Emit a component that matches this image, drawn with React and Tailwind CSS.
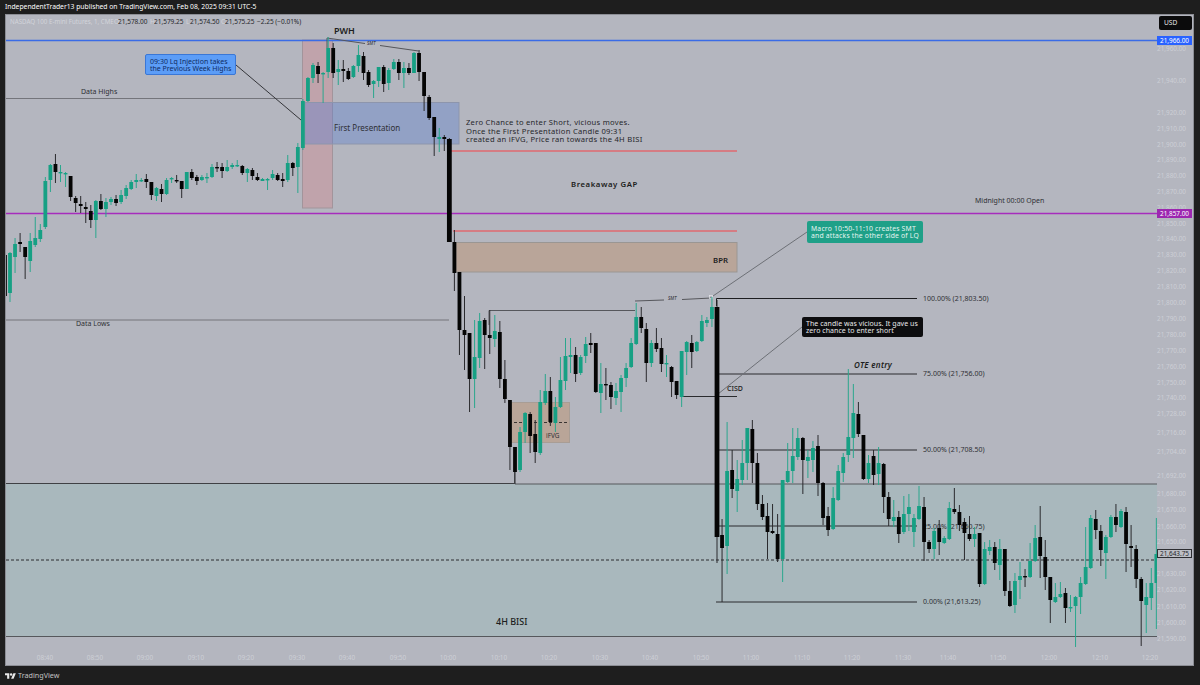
const candles = [
  [0,255,255,296,296],[1,252,253,293,302],[1,238,244,257,273],[0,233,242,244,252],[0,247,247,257,279],[1,233,241,261,272],[1,217,238,245,247],[1,224,230,239,242],
  [1,177,181,227,229],[1,164,165,180,192],[0,154,164,172,183],[1,165,172,173,182],[1,172,173,174,187],[0,176,176,197,201],[0,196,198,203,212],[0,196,204,206,213],
  [0,202,207,209,223],[0,205,211,220,228],[1,200,201,220,238],[0,194,201,209,210],[1,198,202,209,217],[1,197,199,202,205],[0,195,199,203,206],[1,190,195,202,204],
  [1,185,188,196,199],[1,180,182,189,190],[1,174,180,182,188],[1,178,180,181,182],[0,174,179,182,188],[0,182,182,195,200],[1,187,188,196,201],[0,184,189,194,202],
  [1,178,180,194,195],[1,177,178,179,183],[0,175,180,181,183],[0,181,181,189,198],[1,172,172,189,189],[0,169,172,178,180],[0,175,177,181,185],[1,175,177,180,181],
  [1,173,177,178,183],[1,164,167,177,178],[0,162,167,168,172],[0,163,167,171,178],[1,160,167,171,172],[1,163,165,167,169],[1,160,165,166,167],[0,165,166,173,175],
  [1,168,169,173,182],[0,168,170,176,180],[0,173,177,180,181],[1,178,179,181,181],[1,178,179,180,190],[1,170,174,178,180],[0,173,175,180,181],[0,173,179,181,187],
  [1,155,163,180,182],[0,162,163,168,176],[1,143,147,167,193],[1,99,101,148,150],[1,77,78,101,102],[1,63,65,78,83],[0,62,66,74,83],[1,72,73,74,103],
  [1,37,48,72,78],[0,43,48,73,78],[1,60,69,72,85],[0,60,69,71,82],[0,68,71,79,80],[1,65,66,77,78],[1,45,55,66,72],[0,52,56,73,80],
  [0,70,72,85,87],[1,80,81,84,98],[1,67,67,81,87],[0,65,67,84,92],[1,68,70,83,90],[1,59,62,69,70],[0,59,62,73,80],[1,62,68,73,88],
  [0,63,68,73,75],[1,52,53,73,73],[0,50,53,72,81],[0,72,72,96,111],[0,95,97,118,120],[0,117,117,137,156],[1,128,137,139,152],[0,135,137,139,151],
  [0,138,139,242,242],[0,230,242,273,291],[0,272,272,330,355],[0,296,330,335,370],[0,333,333,379,412],[1,320,357,379,408],[1,313,321,358,368],[0,318,320,335,369],
  [0,310,335,338,354],[1,315,331,339,347],[0,321,332,379,388],[0,360,379,399,403],[0,400,400,447,470],[0,447,447,472,484],[1,427,432,470,472],[1,412,413,432,443],
  [0,412,414,436,453],[0,420,434,452,463],[1,390,402,453,455],[1,374,391,403,405],[0,377,391,422,426],[1,397,407,423,432],[1,357,380,407,408],[1,338,356,381,390],
  [1,338,355,357,373],[0,347,355,374,382],[1,355,357,373,375],[1,337,344,356,363],[0,333,343,345,353],[0,343,343,392,393],[1,363,384,393,413],[0,368,384,385,400],
  [0,382,385,397,409],[1,383,391,398,405],[1,375,378,392,412],[1,363,368,378,387],[1,338,343,367,368],[1,303,317,344,345],[0,307,317,328,333],[0,323,329,363,382],
  [1,340,343,363,367],[0,328,343,349,352],[0,338,348,364,372],[1,355,363,364,377],[0,366,367,382,397],[0,381,381,395,399],[1,351,351,397,407],[1,341,342,352,375],
  [0,335,343,352,368],[1,341,342,351,352],[1,315,321,341,342],[1,317,320,323,327],[1,297,307,319,327],[0,300,307,537,563],[0,519,535,548,602],[1,422,471,546,574],
  [0,450,470,489,498],[1,460,479,491,512],[1,440,463,480,485],[1,428,428,463,480],[0,420,429,463,483],[0,453,463,504,510],[0,495,504,517,520],[0,503,516,532,559],
  [0,504,531,533,534],[0,514,534,559,562],[1,480,480,559,582],[1,443,471,482,483],[1,428,456,471,483],[1,428,438,457,460],[0,437,438,460,494],[1,450,457,461,478],
  [1,441,448,460,472],[0,435,446,483,496],[0,482,483,518,525],[0,507,516,530,536],[1,487,498,529,530],[1,465,471,500,501],[1,453,457,473,482],[1,369,437,455,462],
  [1,384,413,438,458],[0,402,414,434,437],[0,435,435,479,480],[1,455,463,479,483],[0,450,456,475,485],[1,447,463,474,485],[0,463,464,497,513],[0,492,497,519,526],
  [1,500,517,521,527],[0,511,517,534,543],[1,496,514,532,534],[1,494,507,514,531],[1,514,518,532,547],[1,486,506,519,520],[0,497,507,542,561],[0,540,542,549,553],
  [1,528,531,549,559],[0,520,528,542,555],[1,536,538,543,544],[1,502,508,539,540],[0,488,509,512,514],[0,505,512,525,531],[0,518,522,533,560],[0,516,534,539,541],
  [1,527,534,539,547],[0,533,533,584,587],[1,542,549,584,585],[1,540,547,551,555],[0,542,547,563,570],[1,539,549,565,580],[0,549,549,591,596],[0,581,591,606,607],
  [1,573,581,605,613],[1,562,576,580,599],[0,569,576,577,587],[1,543,561,577,578],[1,525,538,561,562],[0,506,537,556,578],[0,540,557,577,590],[0,577,577,600,623],
  [1,583,597,602,603],[1,582,594,597,598],[0,588,593,608,623],[1,595,607,608,612],[1,596,597,606,647],[1,577,583,597,614],[1,527,567,584,585],[1,515,518,568,569],
  [0,510,519,530,539],[0,525,531,550,566],[1,535,537,553,579],[1,515,517,537,538],[0,504,517,525,532],[1,509,511,527,528],[0,507,512,544,572],[0,525,546,548,567],
  [0,545,549,579,588],[0,577,579,601,646],[1,583,597,605,633],[1,568,583,598,610],[1,518,554,583,629],
]

const priceTicks = [
  ["21,960.00",49],["21,940.00",81],["21,920.00",113],["21,910.00",129],["21,900.00",145],["21,890.00",160],["21,880.00",176],["21,870.00",192],
  ["21,860.00",208],["21,850.00",224],["21,840.00",239],["21,830.00",255],["21,820.00",271],["21,810.00",287],["21,800.00",303],["21,790.00",319],
  ["21,780.00",335],["21,770.00",351],["21,760.00",367],["21,750.00",383],["21,740.00",398],["21,728.00",414],["21,716.00",433],["21,704.00",452],
  ["21,692.00",476],["21,680.00",494],["21,670.00",510],["21,660.00",527],["21,650.00",542],["21,630.00",574],["21,620.00",590],["21,610.00",607],
  ["21,600.00",623],["21,590.00",639],
]

const timeTicks = [
  ["08:40",45],["08:50",95],["09:00",145],["09:10",196],["09:20",246],["09:30",297],["09:40",347],["09:50",398],["10:00",448],["10:10",499],["10:20",549],["10:30",600],
  ["10:40",650],["10:50",701],["11:00",751],["11:10",802],["11:20",852],["11:30",903],["11:40",948],["11:50",998],["12:00",1049],["12:10",1100],["12:20",1150],
]

const Candles = () => candles.map(([up, top, open, close, low], i) => {
  const x = 4.95 + 5.05 * i
  const big = close - open > 90
  return (
    <g key={i}>
      <line x1={x} x2={x} y1={top} y2={low} stroke={up ? "#2aa78d" : "#2a2a2e"} strokeWidth="1" />
      <rect x={x - (big ? 2.4 : 1.9)} width={big ? 4.8 : 3.8} y={open} height={Math.max(close - open, 1.4)} fill={up ? "#17a084" : "#050505"} />
    </g>
  )
})

const Label = ({ x, y, size = 7, weight, italic, spacing, color = "#2f3035", children }) => (
  <text x={x} y={y} fontSize={size} fontWeight={weight} letterSpacing={spacing} fontStyle={italic ? "italic" : undefined} fill={color}>{children}</text>
)

const ChartDrawing = () => (
  <svg className="absolute inset-0 h-full w-full" viewBox="6 15 1151 635">
    {/* zones */}
    <rect x="6" y="484" width="1151" height="152" fill="#a9b8bd" />
    <rect x="302.5" y="40" width="30" height="168" fill="#c0a3ab" stroke="#a2949b" />
    <rect x="305" y="102.5" width="154" height="41.5" fill="#5c7fd0" fillOpacity="0.38" stroke="#8d95ac" />
    <rect x="456" y="242.5" width="281" height="29.5" fill="#b9a599" stroke="#9a9693" />
    <rect x="511.5" y="402.5" width="58" height="40" fill="#b9a598" stroke="#a89d95" />
    {/* levels */}
    <line x1="6" x2="1157" y1="40.5" y2="40.5" stroke="#3a6ce6" strokeWidth="1.4" />
    <line x1="6" x2="1157" y1="213.5" y2="213.5" stroke="#a62cbd" strokeWidth="1.4" />
    <line x1="6" x2="302" y1="98.5" y2="98.5" stroke="#74757b" />
    <line x1="6" x2="449" y1="320" y2="320" stroke="#74757b" />
    <line x1="236" x2="301" y1="65" y2="120" stroke="#35363a" />
    <line x1="450" x2="737" y1="151" y2="151" stroke="#e0696f" strokeWidth="1.6" />
    <line x1="453" x2="737" y1="231" y2="231" stroke="#e0696f" strokeWidth="1.6" />
    <line x1="6" x2="515" y1="483.5" y2="483.5" stroke="#3f4044" strokeWidth="1.2" />
    <line x1="515" x2="1157" y1="484" y2="484" stroke="#56585c" />
    <line x1="514.5" x2="514.5" y1="470" y2="484" stroke="#56585c" />
    <line x1="6" x2="1157" y1="636.5" y2="636.5" stroke="#56585c" />
    <line x1="6" x2="1157" y1="560" y2="560" stroke="#2c2d30" strokeDasharray="3 2" />
    <line x1="514" x2="569" y1="422.5" y2="422.5" stroke="#3a3532" strokeDasharray="3 2" />
    {/* smt */}
    <path d="M327 48V38L365 43.5M380 45.5L418.5 51" fill="none" stroke="#55565b" />
    <path d="M489 325V310.5H635M635 301L664 300M682 299.5L711 298" fill="none" stroke="#56575c" />
    <rect x="709.5" y="295.5" width="3" height="3" fill="none" stroke="#e4e5ea" strokeWidth="0.7" />
    {/* fib */}
    <path d="M716.5 306V298.5H917" fill="none" stroke="#1d1e20" />
    <line x1="718" x2="917" y1="374" y2="374" stroke="#2a2b2e" />
    <line x1="718" x2="917" y1="450" y2="450" stroke="#2a2b2e" />
    <line x1="718" x2="917" y1="526" y2="526" stroke="#2a2b2e" />
    <line x1="716" x2="917" y1="602" y2="602" stroke="#2a2b2e" />
    <line x1="681" x2="737" y1="396.5" y2="396.5" stroke="#2a2b2e" />
    <line x1="807" x2="713" y1="232" y2="296" stroke="#6d7076" />
    <line x1="802" x2="718" y1="327" y2="394" stroke="#6d7076" />

    {/* chart labels */}
    <Label x={334} y={34} size={9} weight={600} color="#1c1d20">PWH</Label>
    <Label x={367} y={45} size={4.6} italic color="#26272b">SMT</Label>
    <Label x={668} y={300} size={4.6} italic color="#26272b">SMT</Label>
    <Label x={81} y={94}>Data Highs</Label>
    <Label x={76} y={326}>Data Lows</Label>
    <Label x={334} y={131} size={8}>First Presentation</Label>
    <Label x={466} y={125} size={7.6} spacing={0.28} color="#26272b">Zero Chance to enter Short, vicious moves.</Label>
    <Label x={466} y={133.5} size={7.6} spacing={0.28} color="#26272b">Once the First Presentation Candle 09:31</Label>
    <Label x={466} y={142} size={7.6} spacing={0.28} color="#26272b">created an iFVG, Price ran towards the 4H BISI</Label>
    <Label x={571} y={187} size={7.8} spacing={0.55} weight={600} color="#1c1d20">Breakaway GAP</Label>
    <Label x={975} y={203}>Midnight 00:00 Open</Label>
    <Label x={713} y={263} size={7.8} weight={600} color="#1c1d20">BPR</Label>
    <Label x={546} y={438} size={6.4}>iFVG</Label>
    <Label x={727} y={391} weight={500} color="#1c1d20">CISD</Label>
    <Label x={854} y={368} size={8} spacing={0.3} weight={600} italic color="#1c1d20">OTE entry</Label>
    <Label x={923} y={301}>100.00% (21,803.50)</Label>
    <Label x={923} y={376}>75.00% (21,756.00)</Label>
    <Label x={923} y={452}>50.00% (21,708.50)</Label>
    <Label x={923} y={529}>25.00% (21,660.75)</Label>
    <Label x={923} y={604}>0.00% (21,613.25)</Label>
    <Label x={496} y={625} size={9} weight={500} color="#1c1d20">4H BISI</Label>

    <Candles />
  </svg>
)

const Legend = () => (
  <div className="absolute left-[4px] top-[3px] flex h-[8px] items-center whitespace-nowrap text-[6.5px] text-[#26272b]">
    <span className="w-[104px] overflow-hidden text-[6.2px] text-[#d2d4da]">NASDAQ 100 E-mini Futures, 1, CME</span>
    <span className="w-[4px] text-[#d2d4da]">O</span>
    <span className="w-[32px]">21,578.00</span>
    <span className="w-[4px] text-[#d2d4da]">H</span>
    <span className="w-[32px]">21,579.25</span>
    <span className="w-[4px] text-[#d2d4da]">L</span>
    <span className="w-[31px]">21,574.50</span>
    <span className="w-[4px] text-[#d2d4da]">C</span>
    <span className="w-[32px]">21,575.25</span>
    <span>−2.25 (−0.01%)</span>
  </div>
)

const PriceAxis = () => (
  <div className="relative w-[37px] shrink-0 text-[6.4px] text-[#cdcfd6]">
    <div className="absolute left-[2px] top-[1px] flex h-[14px] w-[33px] items-center rounded-[2px] bg-[#0b0b0c] pl-[5px] text-[6.6px] text-[#e8e8e8]">USD</div>
    {priceTicks.map(([label, y]) => (
      <span key={label} className="absolute right-[8px] -translate-y-1/2 leading-none" style={{ top: y - 15 }}>{label}</span>
    ))}
    <div className="absolute left-0 top-[21px] flex h-[9px] w-[35px] items-center justify-center bg-[#2962ff] text-white">21,966.00</div>
    <div className="absolute left-0 top-[194px] flex h-[9px] w-[35px] items-center justify-center bg-[#9c27b0] text-white">21,857.00</div>
    <div className="absolute left-0 top-[534px] flex h-[9px] w-[35px] items-center justify-center border border-[#2d2e32] bg-[#bcbec5] text-[#26272b]">21,643.75</div>
  </div>
)

export default function App() {
  return (
    <div className="flex h-[685px] w-[1200px] flex-col overflow-hidden bg-[#1e1e1e] font-['Noto_Sans',sans-serif]">
      <div className="flex h-[14px] shrink-0 items-center pl-[5px] text-[6.75px] text-white">
        IndependentTrader13 published on TradingView.com, Feb 08, 2025 09:31 UTC-5
      </div>

      <div className="ml-[5px] mr-[6px] flex h-[652px] shrink-0 flex-col border border-[#8c8e95] bg-[#b4b6bf]">
        <div className="flex h-[635px] shrink-0">
          <div className="relative w-[1151px] shrink-0 overflow-hidden">
            <ChartDrawing />
            <Legend />

            <div className="absolute left-[139px] top-[39px] h-[21px] w-[91px] whitespace-nowrap rounded-[2px] border border-[#3a77d6] bg-[#5c9df7] pl-[4px] pt-[3px] text-[7px] leading-[7px] text-[#0e2c63]">
              <div>09:30 Lq Injection takes</div>
              <div>the Previous Week Highs</div>
            </div>
            <div className="absolute left-[801px] top-[206px] h-[22px] w-[116px] whitespace-nowrap rounded-[2px] bg-[#1fa088] pl-[4px] pt-[4px] text-[6.8px] leading-[7.4px] tracking-[0.2px] text-[#e6f5f1]">
              <div>Macro 10:50-11:10 creates SMT</div>
              <div>and attacks the other side of LQ</div>
            </div>
            <div className="absolute left-[796px] top-[302px] h-[20px] w-[121px] whitespace-nowrap rounded-[2px] bg-[#0d0d0f] pl-[4px] pt-[3px] text-[7px] leading-[7.4px] tracking-[0.05px] text-[#e8e8ea]">
              <div>The candle was vicious. It gave us</div>
              <div>zero chance to enter short</div>
            </div>
          </div>
          <PriceAxis />
        </div>

        <div className="relative h-[15px] shrink-0 text-[6.4px] text-[#cdcfd6]">
          {timeTicks.map(([label, x]) => (
            <span key={label} className="absolute top-[5px] -translate-x-1/2 leading-none" style={{ left: x - 6 }}>{label}</span>
          ))}
        </div>
      </div>

      <div className="flex flex-1 items-center gap-[2px] pl-[5px] text-[7.2px] text-[#c4c4c4]">
        <svg className="w-[11px]" viewBox="0 0 36 24" fill="#e8e8e8">
          <path d="M14 22H7V11H0V4h14v18zM28 22h-8l7.5-18h8L28 22z" />
          <circle cx="20" cy="8" r="4" />
        </svg>
        <span>TradingView</span>
      </div>
    </div>
  )
}
